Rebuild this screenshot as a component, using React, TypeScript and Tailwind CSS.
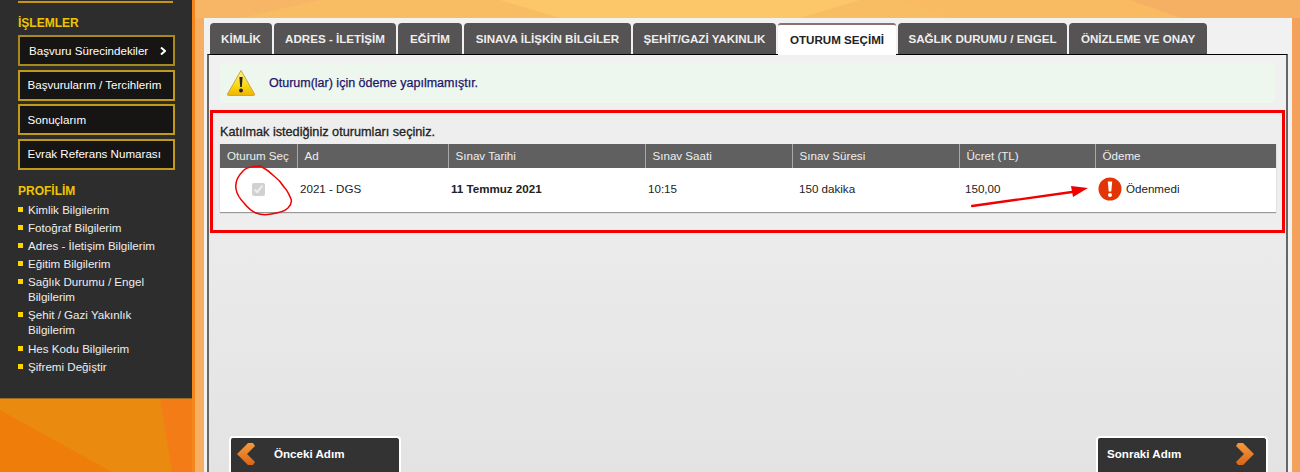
const tabs = [
  { label: "KİMLİK", width: "w-[62px]" },
  { label: "ADRES - İLETİŞİM", width: "w-[122px]" },
  { label: "EĞİTİM", width: "w-[64px]" },
  { label: "SINAVA İLİŞKİN BİLGİLER", width: "w-[167px]" },
  { label: "ŞEHİT/GAZİ YAKINLIK", width: "w-[143px]" },
  { label: "OTURUM SEÇİMİ", width: "w-[118px]" },
  { label: "SAĞLIK DURUMU / ENGEL", width: "w-[169px]" },
  { label: "ÖNİZLEME VE ONAY", width: "w-[138px]" },
];

const menu = [
  "Başvuru Sürecindekiler",
  "Başvurularım / Tercihlerim",
  "Sonuçlarım",
  "Evrak Referans Numarası",
];

const profile = [
  "Kimlik Bilgilerim",
  "Fotoğraf Bilgilerim",
  "Adres - İletişim Bilgilerim",
  "Eğitim Bilgilerim",
  "Sağlık Durumu / Engel Bilgilerim",
  "Şehit / Gazi Yakınlık Bilgilerim",
  "Hes Kodu Bilgilerim",
  "Şifremi Değiştir",
];

function Backdrop() {
  return (
    <svg
      className="absolute inset-0 h-full w-full"
      viewBox="0 0 1300 472"
      preserveAspectRatio="none"
    >
      <rect width="1300" height="472" fill="#f8bc62" />
      <polygon points="192,0 192,472 0,472 0,0" fill="#ea8b10" />
      <polygon points="0,410 0,472 112,472" fill="#ee7d0a" />
      <polygon points="160,398 195,398 195,472 172,472" fill="#f47c16" />
      <rect x="192" width="3" height="472" fill="#f5861e" />
      <polygon points="195,0 320,0 240,18 195,18" fill="#f7b566" />
      <polygon points="500,0 860,0 800,18 560,18" fill="#fcc768" />
      <polygon points="900,0 1130,0 1190,18 950,18" fill="#f9bb62" />
      <polygon points="1130,0 1300,0 1300,18 1180,18" fill="#f6b063" />
      <polygon points="1292,18 1300,18 1300,472 1292,472" fill="#f3a25c" />
      <polygon points="195,18 204,18 204,472 195,472" fill="#f6ae62" />
    </svg>
  );
}

function Sidebar() {
  return (
    <aside className="relative h-[398px] w-[192px] shrink-0 bg-[#2d2d2d] pl-[18px] pr-[17px] pt-[1px] shadow-[0_1px_0_#9c6a1e]">
      <div className="h-[2px] w-[155px] bg-[#c8950f]" />
      <h2 className="mt-[13px] text-[12px] font-bold leading-[15px] text-[#f0c400]">İŞLEMLER</h2>
      <div className="mt-[4px] flex w-[157px] flex-col gap-[3.5px]">
        {menu.map((item, i) => (
          <a
            key={item}
            className={
              i === 0
                ? "flex h-[31px] items-center justify-between border-2 border-[#a88a1c] bg-[#171513] pl-[9px] pr-[7px] text-[11.6px] text-white"
                : "flex h-[31px] items-center border-2 border-[#c09a1a] bg-[#171513] pl-[7.5px] text-[11.6px] text-white"
            }
          >
            {item}
            {i === 0 && (
              <svg width="6" height="8" viewBox="0 0 6 8">
                <path d="M1 0.5 L5 4 L1 7.5" fill="none" stroke="#fff" strokeWidth="2" />
              </svg>
            )}
          </a>
        ))}
      </div>
      <h2 className="mt-[14px] text-[12px] font-bold leading-[15px] text-[#f0c400]">PROFİLİM</h2>
      <ul className="mt-[3px] flex flex-col gap-[3.2px] pr-[5px]">
        {profile.map((item) => (
          <li key={item} className="flex text-[11.6px] leading-[15px] text-[#eeeeee]">
            <span className="mr-[5px] mt-[5px] h-[5px] w-[5px] shrink-0 bg-[#ffd500]" />
            <span>{item}</span>
          </li>
        ))}
      </ul>
    </aside>
  );
}

function WarningIcon() {
  return (
    <svg width="30" height="28" viewBox="0 0 30 28">
      <defs>
        <linearGradient id="warn" x1="0" y1="0" x2="0" y2="1">
          <stop offset="0" stopColor="#fff58a" />
          <stop offset="0.6" stopColor="#fbd80f" />
          <stop offset="1" stopColor="#eeb400" />
        </linearGradient>
      </defs>
      <path
        d="M15 1.5 L28.5 25 Q29 26.5 27.5 26.5 L2.5 26.5 Q1 26.5 1.5 25 Z"
        fill="url(#warn)"
        stroke="#c9a64a"
        strokeWidth="1"
        strokeLinejoin="round"
      />
      <path d="M13.4 8 L16.6 8 L15.8 18 L14.2 18 Z" fill="#222" />
      <circle cx="15" cy="21.5" r="1.9" fill="#222" />
    </svg>
  );
}

function ErrorIcon() {
  return (
    <svg width="24" height="24" viewBox="0 0 24 24">
      <circle cx="12" cy="12" r="11.5" fill="#e23405" />
      <path d="M9.8 4.5 L14.2 4.5 L13.3 14.5 L10.7 14.5 Z" fill="#fff" />
      <circle cx="12" cy="18" r="2" fill="#fff" />
    </svg>
  );
}

function Chevron({ flip }: { flip?: boolean }) {
  return (
    <svg width="18" height="22" viewBox="0 0 18 22" className={flip ? "-scale-x-100" : ""}>
      <defs>
        <linearGradient id={flip ? "chevL" : "chevR"} x1="0" y1="0" x2="0" y2="1">
          <stop offset="0" stopColor="#f69a3a" />
          <stop offset="1" stopColor="#d9661a" />
        </linearGradient>
      </defs>
      <path
        d="M2 0 L7 0 L18 11 L7 22 L2 22 L0 19 L8 11 L0 3 Z"
        fill={`url(#${flip ? "chevL" : "chevR"})`}
      />
    </svg>
  );
}

function SessionTable() {
  const head = "h-[24px] border-l border-[#a8a8a8] pl-[7px] text-left font-normal first:border-l-0";
  return (
    <table className="w-[1056px] table-fixed border-collapse text-[11.6px] shadow-[0_1px_1px_#999]">
      <thead>
        <tr className="bg-[#606060] text-[#eeeeee]">
          <th className={`${head} w-[77px]`}>Oturum Seç</th>
          <th className={`${head} w-[151px]`}>Ad</th>
          <th className={`${head} w-[197px]`}>Sınav Tarihi</th>
          <th className={`${head} w-[147px]`}>Sınav Saati</th>
          <th className={`${head} w-[167px]`}>Sınav Süresi</th>
          <th className={`${head} w-[136px]`}>Ücret (TL)</th>
          <th className={head}>Ödeme</th>
        </tr>
      </thead>
      <tbody>
        <tr className="h-[44px] bg-white text-[#222]">
          <td className="pb-[3px] text-center">
            <input type="checkbox" checked disabled readOnly className="m-0 align-middle" />
          </td>
          <td className="pb-[3px] pl-[3px]">2021 - DGS</td>
          <td className="pb-[3px] pl-[3px] font-bold">11 Temmuz 2021</td>
          <td className="pb-[3px] pl-[3px]">10:15</td>
          <td className="pb-[3px] pl-[7px]">150 dakika</td>
          <td className="pb-[3px] pl-[6px]">150,00</td>
          <td className="pb-[3px] pl-[3px]">
            <div className="flex items-center gap-[4px]">
              <ErrorIcon />
              <span>Ödenmedi</span>
            </div>
          </td>
        </tr>
      </tbody>
    </table>
  );
}

function StepButton({ label, dir }: { label: string; dir: "prev" | "next" }) {
  return (
    <a
      className={
        dir === "prev"
          ? "flex h-[36px] w-[172px] items-start gap-[19px] rounded-t-[4px] border-2 border-b-0 border-white bg-[#333333] pl-[6px] pt-[5px] text-[11.6px] font-bold text-white"
          : "flex h-[36px] w-[172px] items-start justify-between rounded-t-[4px] border-2 border-b-0 border-white bg-[#333333] pl-[9px] pr-[12px] pt-[5px] text-[11.6px] font-bold text-white"
      }
    >
      {dir === "prev" && <Chevron flip />}
      <span className="mt-[2px]">{label}</span>
      {dir === "next" && <Chevron />}
    </a>
  );
}

export default function App() {
  return (
    <div className="relative flex h-[472px] w-[1300px] overflow-hidden font-['Liberation_Sans',Arial,sans-serif]">
      <Backdrop />
      <Sidebar />
      <main className="relative ml-[12px] mt-[18px] flex w-[1088px] flex-col bg-[#f1f1f1] pl-[3px] pr-[4px] pt-[5px]">
        <nav className="flex gap-[2px] pl-[3px]">
          {tabs.map((tab) => (
            <div
              key={tab.label}
              className={
                tab.label === "OTURUM SEÇİMİ"
                  ? `${tab.width} relative z-10 -mb-px flex h-[32px] items-center justify-center whitespace-nowrap rounded-t-[3px] border-t-2 border-[#8a7070] bg-white text-[11.6px] font-bold text-[#222]`
                  : `${tab.width} flex h-[31px] items-center justify-center whitespace-nowrap rounded-t-[4px] bg-[#555353] text-[11.6px] font-bold text-[#eeeeee]`
              }
            >
              {tab.label}
            </div>
          ))}
        </nav>
        <section className="flex flex-1 flex-col border-x-2 border-t border-x-[#666] border-t-black bg-gradient-to-b from-[#f1f1f1] to-[#e3e3e3] pl-[1px] pr-[1px] pt-[8px]">
          <div className="mx-[10px] flex h-[40px] items-center rounded-[3px] bg-[#edf7ee] pl-[6px]">
            <WarningIcon />
            <p className="ml-[13px] text-[12.5px] text-[#21156b] [-webkit-text-stroke:0.25px_#21156b]">
              Oturum(lar) için ödeme yapılmamıştır.
            </p>
          </div>
          <div className="relative mt-[7px] h-[123px] border-[3px] border-[#f50000] bg-[#eeeeee] pl-[7px] pt-[12px]">
            <p className="text-[12.7px] leading-[15px] text-[#222] [-webkit-text-stroke:0.3px_#222]">
              Katılmak istediğiniz oturumları seçiniz.
            </p>
            <div className="mt-[4px]">
              <SessionTable />
            </div>
            <svg
              className="pointer-events-none absolute left-[20px] top-[51px]"
              width="70"
              height="54"
              viewBox="0 0 70 54"
              fill="none"
            >
              <path
                d="M29 2 C20 2 13 3 10 7 C4 13 2 19 3 25 C4 31 7 35 11 39 C15 44 18 47 23 49 C28 51 33 51 38 50 C46 49 52 47 55 44 C58 41 59 38 58 35 C56 30 54 26 51 23 C48 18 45 15 41 12 C37 8 33 5 29 3"
                stroke="#f00000"
                strokeWidth="1.5"
              />
            </svg>
            <svg
              className="pointer-events-none absolute left-[758px] top-[70px]"
              width="130"
              height="30"
              viewBox="0 0 130 30"
              fill="none"
            >
              <path d="M1 23 L101 9" stroke="#f00000" strokeWidth="2.4" strokeLinecap="round" />
              <path d="M100 3 L117 5 L102 14 Z" fill="#f00000" />
            </svg>
          </div>
          <div className="mt-auto flex justify-between pl-[19px] pr-[17px]">
            <StepButton label="Önceki Adım" dir="prev" />
            <StepButton label="Sonraki Adım" dir="next" />
          </div>
        </section>
      </main>
    </div>
  );
}
